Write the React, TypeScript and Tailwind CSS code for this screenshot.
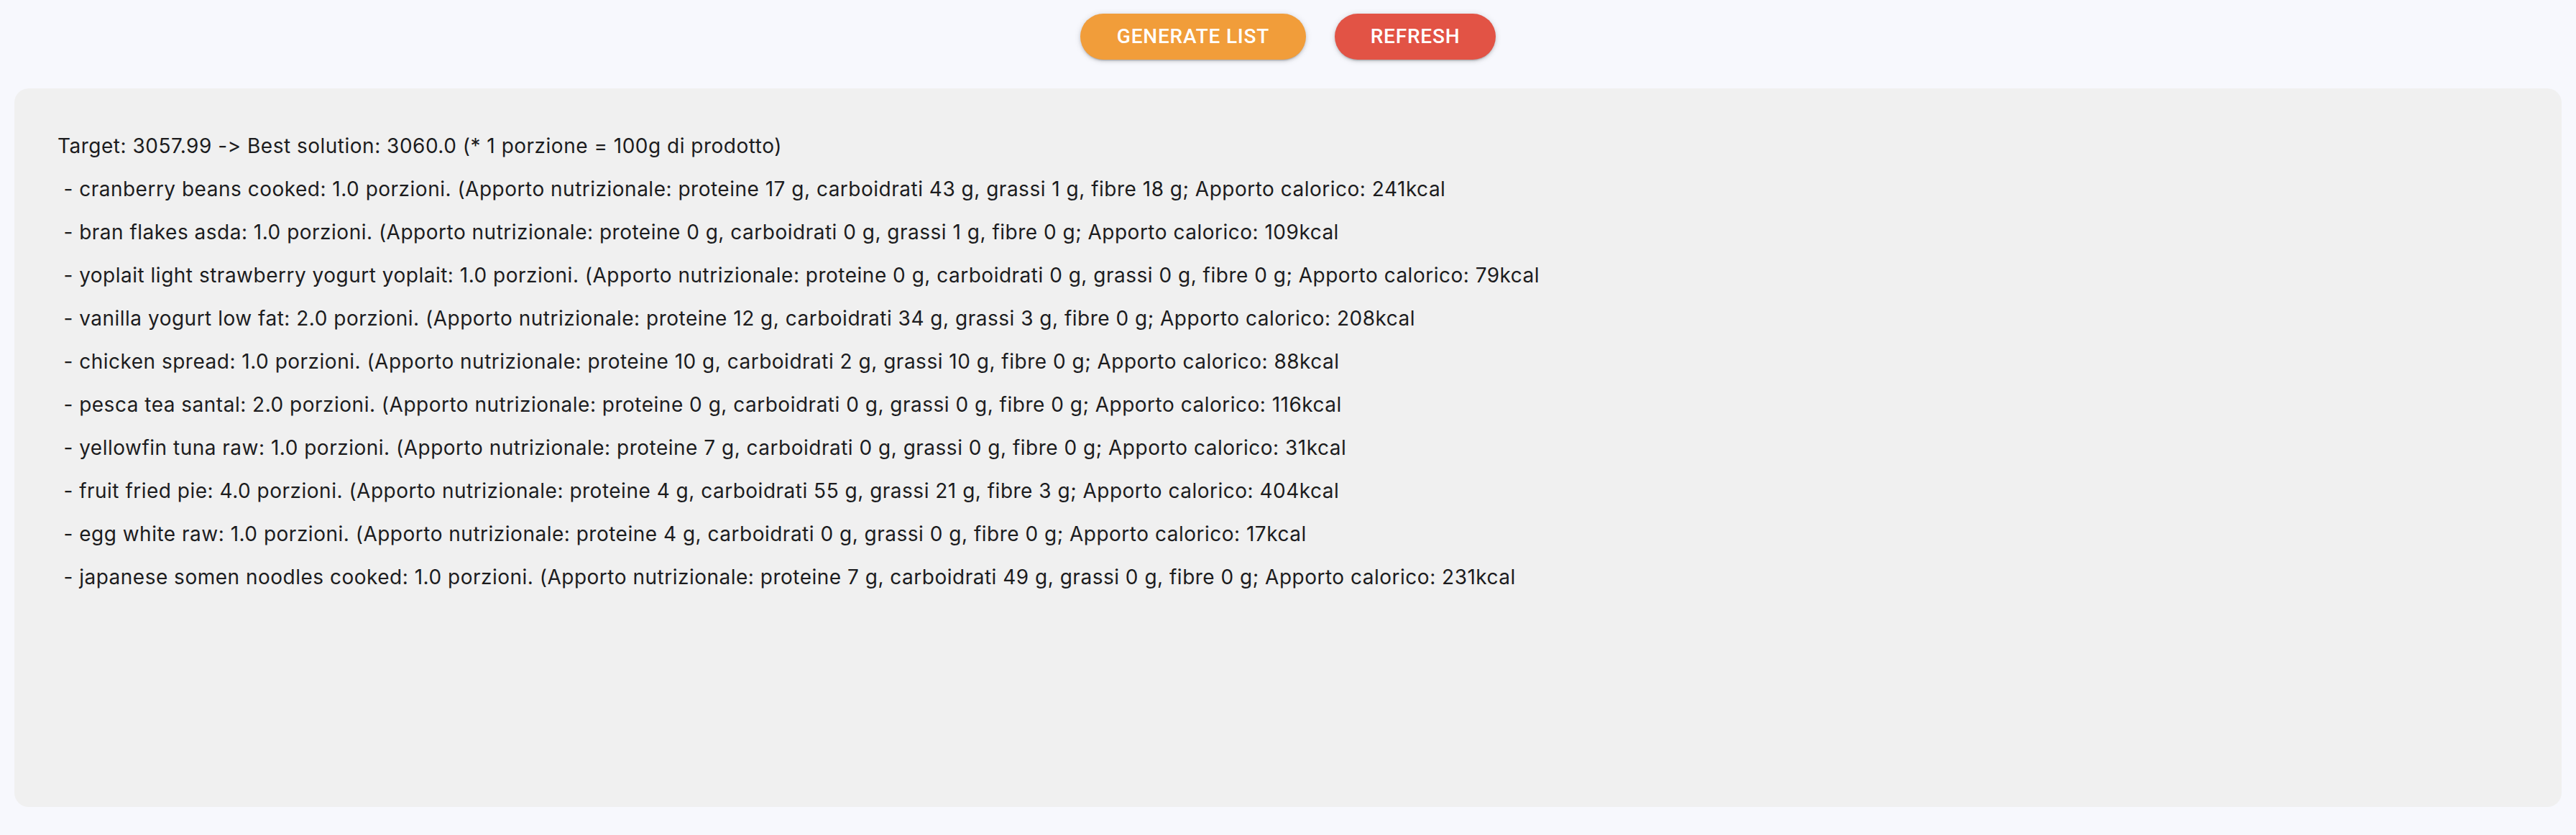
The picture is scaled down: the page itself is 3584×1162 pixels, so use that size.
import React from "react";

const lines = [
  "Target: 3057.99 -> Best solution: 3060.0 (* 1 porzione = 100g di prodotto)",
  " - cranberry beans cooked: 1.0 porzioni. (Apporto nutrizionale: proteine 17 g, carboidrati 43 g, grassi 1 g, fibre 18 g; Apporto calorico: 241kcal",
  " - bran flakes asda: 1.0 porzioni. (Apporto nutrizionale: proteine 0 g, carboidrati 0 g, grassi 1 g, fibre 0 g; Apporto calorico: 109kcal",
  " - yoplait light strawberry yogurt yoplait: 1.0 porzioni. (Apporto nutrizionale: proteine 0 g, carboidrati 0 g, grassi 0 g, fibre 0 g; Apporto calorico: 79kcal",
  " - vanilla yogurt low fat: 2.0 porzioni. (Apporto nutrizionale: proteine 12 g, carboidrati 34 g, grassi 3 g, fibre 0 g; Apporto calorico: 208kcal",
  " - chicken spread: 1.0 porzioni. (Apporto nutrizionale: proteine 10 g, carboidrati 2 g, grassi 10 g, fibre 0 g; Apporto calorico: 88kcal",
  " - pesca tea santal: 2.0 porzioni. (Apporto nutrizionale: proteine 0 g, carboidrati 0 g, grassi 0 g, fibre 0 g; Apporto calorico: 116kcal",
  " - yellowfin tuna raw: 1.0 porzioni. (Apporto nutrizionale: proteine 7 g, carboidrati 0 g, grassi 0 g, fibre 0 g; Apporto calorico: 31kcal",
  " - fruit fried pie: 4.0 porzioni. (Apporto nutrizionale: proteine 4 g, carboidrati 55 g, grassi 21 g, fibre 3 g; Apporto calorico: 404kcal",
  " - egg white raw: 1.0 porzioni. (Apporto nutrizionale: proteine 4 g, carboidrati 0 g, grassi 0 g, fibre 0 g; Apporto calorico: 17kcal",
  " - japanese somen noodles cooked: 1.0 porzioni. (Apporto nutrizionale: proteine 7 g, carboidrati 49 g, grassi 0 g, fibre 0 g; Apporto calorico: 231kcal",
];

export default function App() {
  return (
    <div className="h-[1162px] overflow-hidden w-full bg-[#f7f8fd] flex flex-col">
      <div className="flex justify-center gap-[40px] pt-[19px]">
        <button className="h-[64px] w-[314px] rounded-full bg-[#f19d3a] text-white text-[28px] font-medium uppercase tracking-[0.8px] shadow-[0_3px_2px_-2px_rgba(0,0,0,0.2),0_2px_4px_0_rgba(0,0,0,0.14),0_1px_10px_0_rgba(0,0,0,0.12)] font-['Roboto',sans-serif]">
          Generate List
        </button>
        <button className="h-[64px] w-[224px] rounded-full bg-[#e25345] text-white text-[28px] font-medium uppercase tracking-[0.8px] shadow-[0_3px_2px_-2px_rgba(0,0,0,0.2),0_2px_4px_0_rgba(0,0,0,0.14),0_1px_10px_0_rgba(0,0,0,0.12)] font-['Roboto',sans-serif]">
          Refresh
        </button>
      </div>
      <div className="mx-[20px] mt-[40px] h-[1000px] rounded-[20px] bg-[#f0f0f0] pl-[60px] pt-[50px] font-['Inter',sans-serif] text-[28px] tracking-[0.5px] text-[#1c1c1e] [font-variant-ligatures:none] [font-feature-settings:'calt'_0,'liga'_0]">
        {lines.map((l, i) => (
          <div key={i} className="leading-[60px] whitespace-pre">
            {l}
          </div>
        ))}
      </div>
    </div>
  );
}
